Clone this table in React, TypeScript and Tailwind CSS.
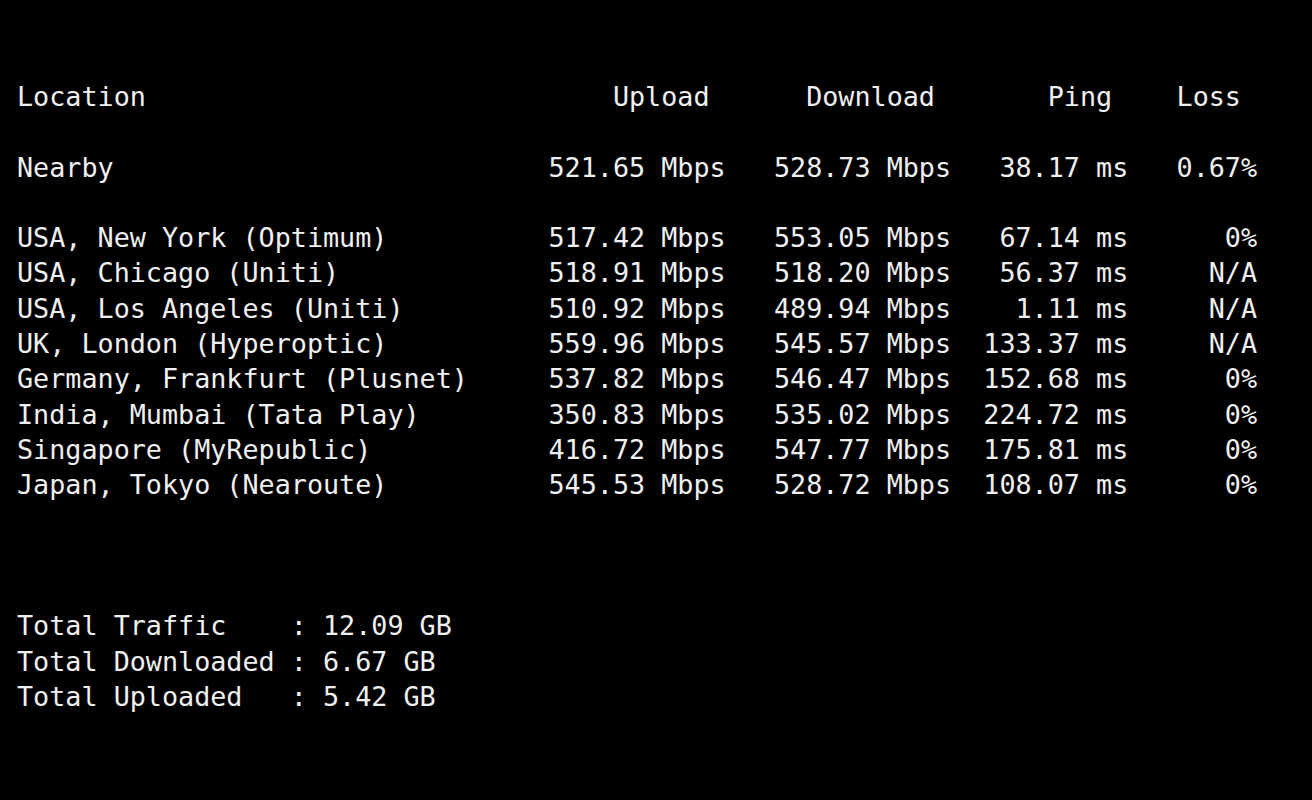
import React from "react";

type Row = {
  location: string;
  upload: string;
  download: string;
  ping: string;
  loss: string;
};

const NEARBY: Row = {
  location: "Nearby",
  upload: "521.65 Mbps",
  download: "528.73 Mbps",
  ping: "38.17 ms",
  loss: "0.67%",
};

const ROWS: Row[] = [
  { location: "USA, New York (Optimum)", upload: "517.42 Mbps", download: "553.05 Mbps", ping: "67.14 ms", loss: "0%" },
  { location: "USA, Chicago (Uniti)", upload: "518.91 Mbps", download: "518.20 Mbps", ping: "56.37 ms", loss: "N/A" },
  { location: "USA, Los Angeles (Uniti)", upload: "510.92 Mbps", download: "489.94 Mbps", ping: "1.11 ms", loss: "N/A" },
  { location: "UK, London (Hyperoptic)", upload: "559.96 Mbps", download: "545.57 Mbps", ping: "133.37 ms", loss: "N/A" },
  { location: "Germany, Frankfurt (Plusnet)", upload: "537.82 Mbps", download: "546.47 Mbps", ping: "152.68 ms", loss: "0%" },
  { location: "India, Mumbai (Tata Play)", upload: "350.83 Mbps", download: "535.02 Mbps", ping: "224.72 ms", loss: "0%" },
  { location: "Singapore (MyRepublic)", upload: "416.72 Mbps", download: "547.77 Mbps", ping: "175.81 ms", loss: "0%" },
  { location: "Japan, Tokyo (Nearoute)", upload: "545.53 Mbps", download: "528.72 Mbps", ping: "108.07 ms", loss: "0%" },
];

// column layout in characters, like the terminal printf
const formatRow = (r: Row) =>
  r.location.padEnd(33) +
  r.upload.padStart(11) +
  "   " +
  r.download.padStart(11) +
  r.ping.padStart(11) +
  r.loss.padStart(8);

const header =
  "Location".padEnd(37) + "Upload".padEnd(12) + "Download".padEnd(15) + "Ping".padEnd(8) + "Loss";

const lines: string[] = [
  header,
  "",
  formatRow(NEARBY),
  "",
  ...ROWS.map(formatRow),
  "",
  "",
  "",
  "Total Traffic    : 12.09 GB",
  "Total Downloaded : 6.67 GB",
  "Total Uploaded   : 5.42 GB",
];

const App = () => {
  return (
    <div className="w-[1312px] h-[800px] bg-black overflow-hidden">
      <pre className="pt-[79px] pl-[17px] text-[#f0f0f0] text-[26.75px] leading-[35.3px] font-['DejaVu_Sans_Mono',monospace]">
        {lines.map((line, idx) => (
          <div key={idx} className="h-[35.3px] whitespace-pre">
            {line}
          </div>
        ))}
      </pre>
    </div>
  );
};

export default App;
